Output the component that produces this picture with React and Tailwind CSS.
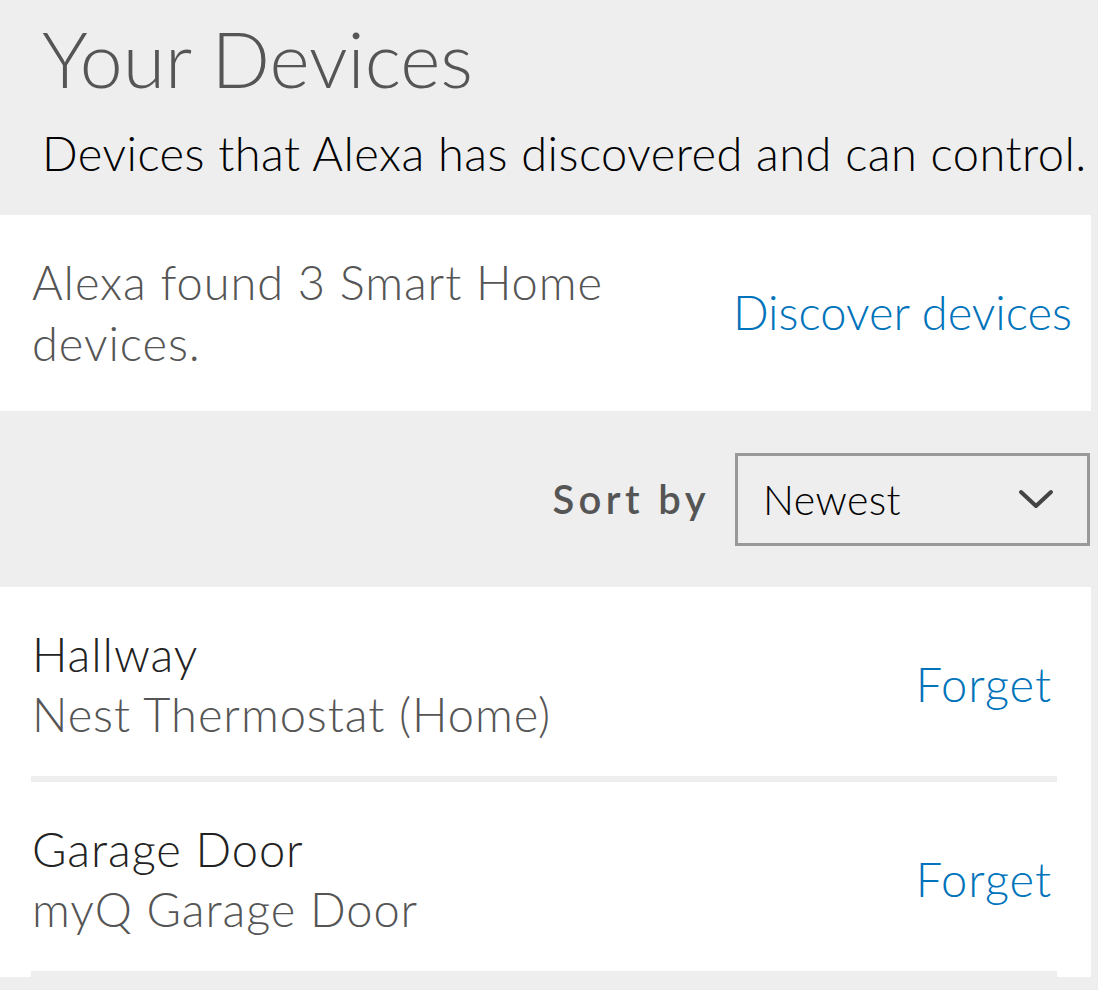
import React from 'react';

const devices = [
  { name: 'Hallway', detail: 'Nest Thermostat (Home)' },
  { name: 'Garage Door', detail: 'myQ Garage Door' },
];

const App = () => {
  return (
    <div className="min-h-screen bg-[#eeeeee] font-['Lato',sans-serif]">
      {/* Header */}
      <div className="pl-[42px] pt-[12px] pb-[33px]">
        <h1 className="text-[77px] leading-[1.2] font-light text-[#555555]">Your Devices</h1>
        <p className="mt-[21px] text-[47px] leading-[1.2] font-light tracking-[0.01em] text-[#000000]">
          Devices that Alexa has discovered and can control.
        </p>
      </div>

      {/* Discovery card */}
      <div className="mr-[7px] bg-white flex items-center justify-between pl-[32px] pr-[19px] py-[37px]">
        <p className="w-[640px] text-[47px] leading-[61px] font-light tracking-[0.02em] text-[#555555]">
          Alexa found 3 Smart Home devices.
        </p>
        <button className="text-[47px] leading-[61px] font-light text-[#0073bb]">Discover devices</button>
      </div>

      {/* Sort bar */}
      <div className="flex items-center justify-end gap-[25px] pr-[8px] pt-[42px] pb-[41px]">
        <span className="text-[40px] font-semibold tracking-[0.11em] text-[#555555]">Sort by</span>
        <div className="w-[355px] h-[93px] border-[3px] border-[#999999] flex items-center justify-between pl-[25px] pr-[33px]">
          <span className="text-[41px] font-light tracking-[0.01em] text-[#000000]">Newest</span>
          <svg width="36" height="20" viewBox="0 0 36 20" fill="none" stroke="#444444" strokeWidth="4" strokeLinecap="round" strokeLinejoin="round">
            <path d="M3 3l15 14L33 3" />
          </svg>
        </div>
      </div>

      {/* Device list */}
      <div className="mr-[7px] bg-white pl-[31px] pr-[34px]">
        {devices.map((d, i) => (
          <div key={i} className="border-b-[6px] border-[#eeeeee]">
            <div className="flex items-center justify-between pl-[1px] pr-[5px] pt-[37px] pb-[32px]">
              <div className="text-[47px] leading-[60px] font-light tracking-[0.02em]">
                <div className="text-[#222222]">{d.name}</div>
                <div className="text-[#555555]">{d.detail}</div>
              </div>
              <button className="text-[47px] leading-[60px] font-light tracking-[0.02em] text-[#0073bb]">Forget</button>
            </div>
          </div>
        ))}
      </div>
    </div>
  );
};

export default App;
